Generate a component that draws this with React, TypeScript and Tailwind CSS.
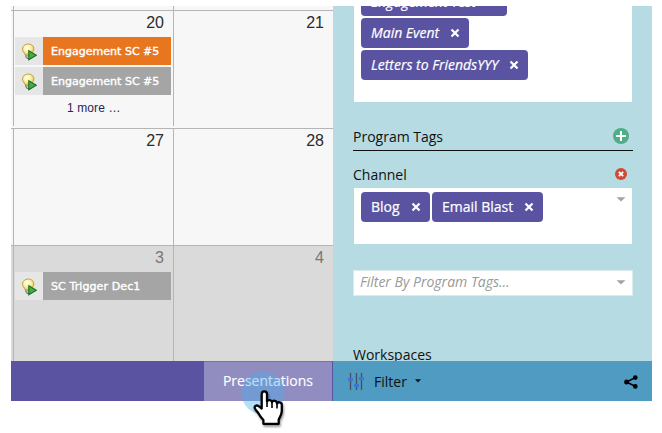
import React from "react";

const sans = "font-['Open_Sans','Noto_Sans',sans-serif]";
const arial = "font-['Liberation_Sans',Arial,sans-serif]";

function Bulb() {
  return (
    <svg width="16" height="18" viewBox="0 0 16 18" className="mt-px block">
      <defs>
        <radialGradient id="glow" cx="0.4" cy="0.35" r="0.65">
          <stop offset="0" stopColor="#fffef0" />
          <stop offset="0.55" stopColor="#fbf0a0" />
          <stop offset="1" stopColor="#e6c843" />
        </radialGradient>
      </defs>
      <path d="M4.500 11 L5 14.5 Q7 17 9 15 L9 11Z" fill="#b8bcc4" stroke="#666" strokeWidth="0.9" />
      <path d="M7.300 1C3.900 1 1.500 3.200 1.500 6c0 2.400 2 3.600 2.800 6h5.600c.4-2.400 3-3.300 3-6C12.900 3.200 10.700 1 7.300 1Z" fill="url(#glow)" stroke="#bd9a34" strokeWidth="0.9" />
      <path d="M7.800 7.800 15.300 12.300 7.800 16.800Z" fill="#3fb043" stroke="#1f6b24" strokeWidth="1.100" />
    </svg>
  );
}

function EventRow({ label, color, tracking }: { label: string; color: string; tracking: string }) {
  return (
    <div className="ml-px flex h-7 w-[156px]">
      <div className="flex w-7 items-center justify-center bg-[#e6e6e6]"><Bulb /></div>
      <div className={`flex flex-1 items-center whitespace-nowrap pl-2 pt-0.5 font-['DejaVu_Sans',Verdana,sans-serif] text-[11px] text-white [-webkit-text-stroke:0.4px_white] ${color} ${tracking}`}>
        {label}
      </div>
    </div>
  );
}

function Day({ n, muted, children }: { n: number; muted?: boolean; children?: React.ReactNode }) {
  return (
    <div className="w-[160px] border-l border-[#b5b5b5]">
      <div className={`${arial} h-[26px] pr-[9px] pt-[3px] text-right text-[16px] leading-[18px] ${muted ? "text-[#777]" : "text-[#2b2b2b]"}`}>{n}</div>
      {children}
    </div>
  );
}

function Tag({ label, italic, width, nudge = "pb-[2px]" }: { label: string; italic?: boolean; width: string; nudge?: string }) {
  return (
    <div className={`${sans} ${width} flex h-[30px] shrink-0 items-center justify-between rounded-[4px] bg-[#5a53a1] pl-[10px] pr-[9px] text-[14px] text-white [-webkit-text-stroke:0.2px_white]`}>
      <span className={`whitespace-nowrap ${nudge} ${italic ? "italic" : ""}`}>{label}</span>
      <svg width="10" height="10" viewBox="0 0 10 10"><path d="M1.500 1.500 8.500 8.500M8.500 1.500 1.500 8.500" stroke="white" strokeWidth="2.200" /></svg>
    </div>
  );
}

function Caret() {
  return <svg width="10" height="5" viewBox="0 0 10 5"><path d="M0.500 0.300h9L5 4.600Z" fill="#a3a3a3" /></svg>;
}

function Calendar() {
  return (
    <div className="h-[355px] w-[322px] overflow-hidden bg-[#f7f7f7]">
      <div className="flex h-1 pl-0.5">
        <div className="w-[160px] border-l border-[#b5b5b5]" />
        <div className="border-l border-[#b5b5b5]" />
      </div>
      <div className="flex h-[118px] border-t border-[#b5b5b5] pb-0.5 pl-0.5">
        <Day n={20}>
          <div className="flex flex-col gap-0.5">
            <EventRow label="Engagement SC #5" color="bg-[#e8761f]" tracking="tracking-[0.02px]" />
            <EventRow label="Engagement SC #5" color="bg-[#a5a5a5]" tracking="tracking-[0.02px]" />
          </div>
          <div className={`${arial} mt-[5px] h-4 pl-[53px] text-[12px] leading-4 tracking-[0.1px] text-[#292557]`}>1 more …</div>
        </Day>
        <Day n={21} />
      </div>
      <div className="flex h-[117px] border-t border-[#b5b5b5] pl-0.5">
        <Day n={27} />
        <Day n={28} />
      </div>
      <div className="flex h-[116px] border-t border-[#b5b5b5] bg-[#dadada] pl-0.5">
        <Day n={3} muted>
          <EventRow label="SC Trigger Dec1" color="bg-[#a5a5a5]" tracking="tracking-[0.1px]" />
        </Day>
        <Day n={4} muted />
      </div>
    </div>
  );
}

function FilterPanel() {
  return (
    <div className={`${sans} h-[355px] w-[319px] overflow-hidden bg-[#b6dbe2] pl-5 pr-5 text-[14px] text-[#111]`}>
      <div className="ml-px flex h-24 w-[278px] flex-col overflow-hidden bg-white pl-[7px]">
        <div className="-mt-5 flex flex-col gap-0.5">
          <Tag label="Engagement Test" italic width="w-[146px]" nudge="pb-0" />
          <Tag label="Main Event" italic width="w-[108px]" />
          <Tag label="Letters to FriendsYYY" italic width="w-[167px]" />
        </div>
      </div>
      <div className="mt-[25px] flex h-6 w-[280px] items-start justify-between border-b border-[#111] pr-[3px]">
        <span className="leading-5">Program Tags</span>
        <svg width="18" height="18" viewBox="0 0 18 18"><circle cx="9" cy="9" r="8" fill="#4fae87" /><path d="M9 4v10M4 9h10" stroke="white" strokeWidth="2" /></svg>
      </div>
      <div className="mt-[14px] flex h-[23px] w-[280px] items-start justify-between pr-[6px]">
        <span className="leading-5">Channel</span>
        <svg width="12" height="12" viewBox="0 0 12 12" className="mt-[3px]"><circle cx="6" cy="6" r="6" fill="#d04a35" /><path d="M3.800 3.800 8.200 8.200M8.200 3.800 3.800 8.200" stroke="white" strokeWidth="1.800" /></svg>
      </div>
      <div className="ml-px flex h-14 w-[278px] items-start bg-white pl-[7px] pr-[6px] pt-1">
        <div className="flex gap-0.5">
          <Tag label="Blog" width="w-[69px]" />
          <Tag label="Email Blast" width="w-[111px]" />
        </div>
        <div className="ml-auto mt-[5px] flex"><Caret /></div>
      </div>
      <div className="mt-[26px] flex h-[26px] w-[280px] items-center justify-between border border-[#d9ebee] bg-white pl-[6px] pr-[6px]">
        <span className="pb-1 italic text-[#999]">Filter By Program Tags...</span>
        <span className="mb-0.5"><Caret /></span>
      </div>
      <div className="mt-[49px] leading-5">Workspaces</div>
    </div>
  );
}

function BottomBar() {
  return (
    <div className={`${sans} flex h-10 text-[14px]`}>
      <div className="flex w-[322px] justify-end bg-[#5a53a1] pr-px">
        <div className="flex w-32 items-center justify-center border-t border-[#79739f] bg-[#928dc1] pb-[3px] text-white [-webkit-text-stroke:0.15px_white]">Presentations</div>
      </div>
      <div className="flex w-[319px] items-center bg-[#4f9bc2] pl-[15px] pr-[14px] text-[#111]">
        <svg width="16" height="17" viewBox="0 0 16 17">
          <path d="M2.500 0v17M8.500 0v17M13.500 0v17" stroke="#46525b" strokeWidth="1.300" />
          <path d="M0 6.500h5M6 12.500h5M11 5.500h5" stroke="#3b76d0" strokeWidth="3" />
        </svg>
        <span className="ml-[10px]">Filter</span>
        <svg width="6" height="4" viewBox="0 0 6 4" className="ml-2"><path d="M0 .3h6L3 3.600Z" fill="#111" /></svg>
        <svg width="14" height="14" viewBox="0 0 14 14" className="ml-auto mt-px"><path d="M11.500 2.500 2.500 7l9 4.500" stroke="black" strokeWidth="1.500" fill="none" /><circle cx="11.300" cy="2.600" r="2.300" /><circle cx="2.600" cy="7" r="2.500" /><circle cx="11.300" cy="11.400" r="2.300" /></svg>
      </div>
    </div>
  );
}

function Pointer() {
  return (
    <svg width="54" height="66" viewBox="0 0 54 66" className="pointer-events-none absolute left-[238px] top-[367px]">
      <circle cx="25" cy="26" r="21.500" fill="#48b0ee" fillOpacity="0.4" />
      <g className="drop-shadow-[1px_2px_1px_rgba(0,0,0,0.4)]">
        <path d="M26.300 24.300c-1.700 0-2.600 1.200-2.600 2.900V41.500l-3-2.400c-2.200-1.400-4.400-.2-4 2 .4 1.700 2.400 3.100 3.700 5.100 1.700 3 3.200 5 5 6.800V56.800H40.700V52.500c1.500-2.700 3.100-5.500 3.100-9V37.500c0-2.300-3.900-3.100-4.800-1 0-3-3.900-3.700-5-1.400-.5-2.200-3.600-2.600-5-.8V27.200c0-1.700-1-2.900-2.700-2.900Z" fill="white" stroke="black" strokeWidth="2.300" strokeLinejoin="round" />
        <path d="M29 34v6M34 35v6M39 36.500v5" stroke="black" strokeWidth="1.600" />
      </g>
    </svg>
  );
}

export default function App() {
  return (
    <div className="relative h-[433px] w-[662px] overflow-hidden bg-white pl-[11px] pt-[6px]">
      <div className="flex">
        <Calendar />
        <FilterPanel />
      </div>
      <BottomBar />
      <Pointer />
    </div>
  );
}
